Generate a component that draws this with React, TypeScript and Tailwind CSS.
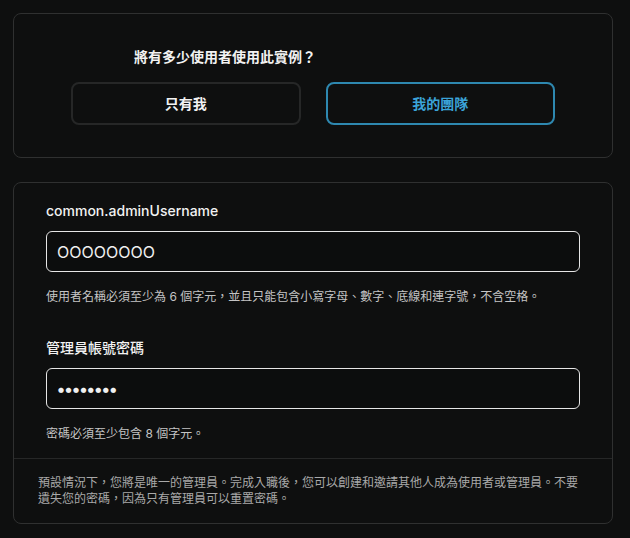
import React from "react"

const font = { fontFamily: 'Inter, "Noto Sans CJK TC", sans-serif' }

const Field = ({
  label,
  value,
  type,
  hint,
}: {
  label: string
  value: string
  type: string
  hint: string
}) => {
  return (
    <div className="flex flex-col">
      <label className="text-sm leading-5 font-medium text-[#f2f2f2]">{label}</label>
      <input
        type={type}
        defaultValue={value}
        readOnly
        className={
          type === "password"
            ? "mt-[10px] h-[41px] w-full rounded-md border border-[#e6e6e6] bg-[#0c0d0d] px-[10px] text-[17px] font-bold tracking-[-0.6px] text-[#f0f0f0] outline-none"
            : "mt-[10px] h-[41px] w-full rounded-md border border-[#e6e6e6] bg-[#0c0d0d] px-[10px] text-base text-[#f0f0f0] outline-none"
        }
        style={font}
      />
      <p className="mt-[17px] text-xs leading-4 text-[#c4c4c4]">{hint}</p>
    </div>
  )
}

export default function App() {
  return (
    <div className="min-h-[538px] w-full bg-[#0e0f0f] pt-[13px] pl-[13px]" style={font}>
      <div className="w-[600px]">
        <div className="rounded-lg border border-[#2f3030] bg-[#0e0f0f] px-[57px] pt-[33px] pb-[32px]">
          <h2 className="ml-[63px] text-sm leading-5 font-bold text-[#f2f2f2]">
            將有多少使用者使用此實例？
          </h2>
          <div className="mt-[15px] grid grid-cols-2 gap-[25px]">
            <button className="h-[43px] rounded-lg border-2 border-[#262727] text-sm font-bold text-[#f2f2f2]">
              只有我
            </button>
            <button className="h-[43px] rounded-lg border-2 border-[#2e88b0] text-sm font-bold text-[#3ba3d8]">
              我的團隊
            </button>
          </div>
        </div>

        <div className="mt-[24px] rounded-lg border border-[#2f3030] bg-[#0e0f0f]">
          <div className="flex flex-col gap-[33px] px-8 pt-[18px] pb-4">
            <Field
              label="common.adminUsername"
              value="OOOOOOOO"
              type="text"
              hint="使用者名稱必須至少為 6 個字元，並且只能包含小寫字母、數字、底線和連字號，不含空格。"
            />
            <Field
              label="管理員帳號密碼"
              value="password"
              type="password"
              hint="密碼必須至少包含 8 個字元。"
            />
          </div>
          <div className="border-t border-[#262727] px-6 pt-4 pb-4">
            <p className="text-xs leading-4 text-[#a9a9a9]">
              預設情況下，您將是唯一的管理員。完成入職後，您可以創建和邀請其他人成為使用者或管理員。不要遺失您的密碼，因為只有管理員可以重置密碼。
            </p>
          </div>
        </div>
      </div>
    </div>
  )
}
